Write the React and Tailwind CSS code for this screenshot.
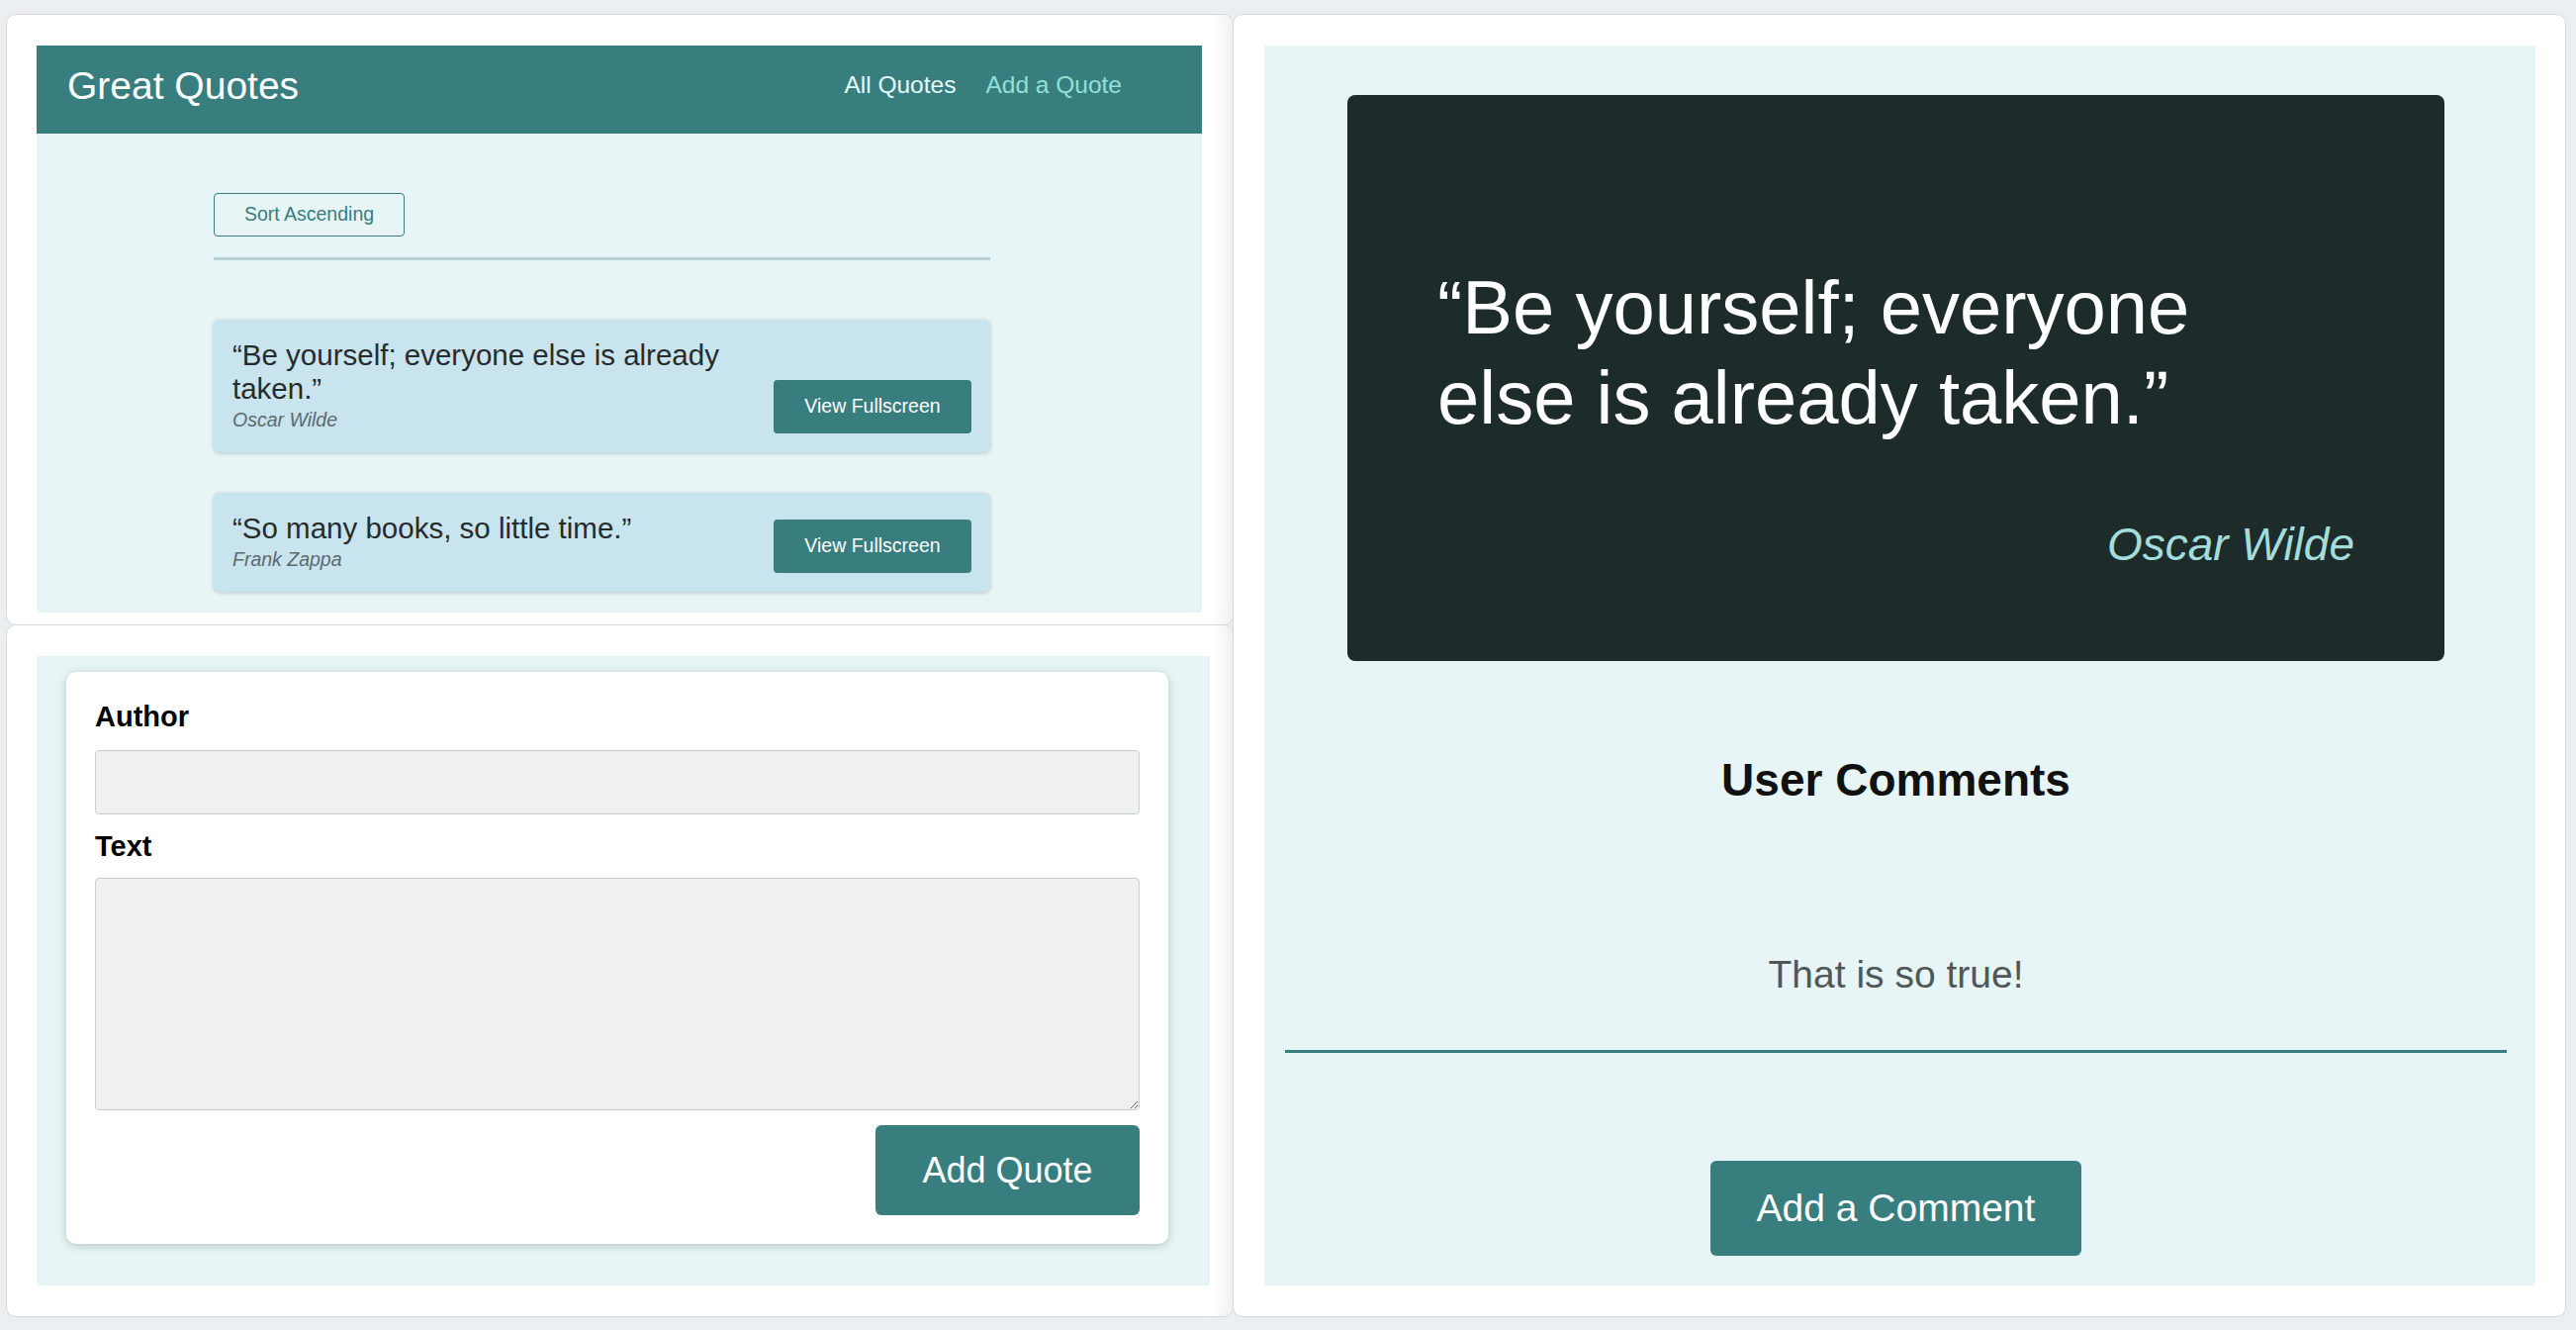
import React from 'react';

const teal = 'bg-[#387e7f]';

const quotes = [
  { id: 'q1', text: '“Be yourself; everyone else is already taken.”', author: 'Oscar Wilde' },
  { id: 'q2', text: '“So many books, so little time.”', author: 'Frank Zappa' },
];

const QuoteItem = ({ quote }) => (
  <li className="flex items-end justify-between gap-4 rounded-[6px] bg-[#c8e4ef] p-[19px] shadow-[0_1px_4px_rgba(0,0,0,0.2)]">
    <figure>
      <blockquote className="text-[29.5px] leading-[34px] text-[#272b2c]">{quote.text}</blockquote>
      <figcaption className="text-[19.5px] italic leading-[28px] text-[#5d6a6e]">{quote.author}</figcaption>
    </figure>
    <button className={`h-[54px] w-[200px] shrink-0 rounded-[4px] ${teal} text-[19.5px] text-white`}>
      View Fullscreen
    </button>
  </li>
);

const QuoteListFrame = () => (
  <div className="h-[618px] w-[1241px] rounded-[10px] border border-[#d6d8da] bg-white pl-[30px] pt-[31px] shadow-[inset_-26px_0_22px_-22px_rgba(0,0,0,0.09)]">
    <div className="h-[573px] w-[1178px] overflow-hidden bg-[#e7f5f6]">
      <header className={`flex h-[89px] items-center justify-between pb-2 pl-[31px] pr-[81px] ${teal}`}>
        <div className="text-[39px] leading-none text-white">Great Quotes</div>
        <nav className="flex gap-[30px] text-[24.5px] leading-none">
          <a className="text-[#e6fcfc]">All Quotes</a>
          <a className="text-[#92e0d8]">Add a Quote</a>
        </nav>
      </header>
      <div className="ml-[179px] w-[785px] pt-[60px]">
        <button className="h-[44px] w-[193px] rounded-[4px] border border-[#387e7f] text-[19.5px] text-[#387e7f]">
          Sort Ascending
        </button>
        <div className="mt-[21px] h-[3px] bg-[#b6d4d2]" />
        <ul className="mt-[60px] flex flex-col gap-[41px]">
          {quotes.map(q => <QuoteItem key={q.id} quote={q} />)}
        </ul>
      </div>
    </div>
  </div>
);

const NewQuoteFrame = () => (
  <div className="-mt-px h-[700px] w-[1241px] rounded-[10px] border border-[#d6d8da] bg-white pl-[30px] pt-[31px] shadow-[inset_-26px_0_22px_-22px_rgba(0,0,0,0.09)]">
    <div className="h-[636px] w-[1186px] bg-[#e7f5f6] pl-[30px] pt-[16px]">
      <form className="flex h-[578px] w-[1114px] flex-col rounded-[10px] bg-white px-[29px] pt-[29px] shadow-[0_2px_10px_rgba(0,0,0,0.2)]">
        <label className="block text-[29px] font-bold leading-[33px] text-black">Author</label>
        <input className="mt-[17px] h-[65px] w-full rounded-[4px] border border-[#c7cccc] bg-[#f0f0f0]" />
        <label className="mt-[16px] block text-[29px] font-bold leading-[33px] text-black">Text</label>
        <textarea className="mt-[15px] h-[235px] w-full rounded-[4px] border border-[#c7cccc] bg-[#f0f0f0]" />
        <div className="mt-[15px] flex justify-end">
          <button className={`h-[91px] w-[267px] rounded-[6px] ${teal} text-[36px] text-white`}>Add Quote</button>
        </div>
      </form>
    </div>
  </div>
);

const HighlightFrame = () => (
  <div className="-ml-px h-[1317px] w-[1348px] rounded-[10px] border border-[#d6d8da] bg-white pl-[31px] pt-[31px]">
    <div className="h-[1253px] w-[1285px] bg-[#e7f5f6]">
      <div className="flex w-[1277px] flex-col items-center">
        <figure className="mt-[50px] w-[1109px] rounded-[8px] bg-[#1d2b2b] px-[91px] pb-[90px] pt-[169px]">
          <p className="text-[76px] leading-[91px] text-white">“Be yourself; everyone<br />else is already taken.”</p>
          <figcaption className="mt-[76px] text-right text-[46px] italic leading-[55px] text-[#a3dcda]">Oscar Wilde</figcaption>
        </figure>
        <h2 className="mt-[94px] text-[46px] font-bold leading-[53px] text-[#111]">User Comments</h2>
        <p className="mt-[147px] text-[39px] leading-[45px] text-[#505757]">That is so true!</p>
        <div className="mt-[54px] h-[3px] w-[1235px] bg-[#387e7f]" />
        <button className={`mt-[109px] h-[96px] w-[375px] rounded-[6px] ${teal} text-[39px] text-white`}>
          Add a Comment
        </button>
      </div>
    </div>
  </div>
);

export default function App() {
  return (
    <div className="min-h-screen bg-[#eceff2] pl-[6px] pt-[14px] font-['Liberation_Sans',Arial,sans-serif]">
      <div className="flex">
        <div className="flex flex-col">
          <QuoteListFrame />
          <NewQuoteFrame />
        </div>
        <HighlightFrame />
      </div>
    </div>
  );
}
